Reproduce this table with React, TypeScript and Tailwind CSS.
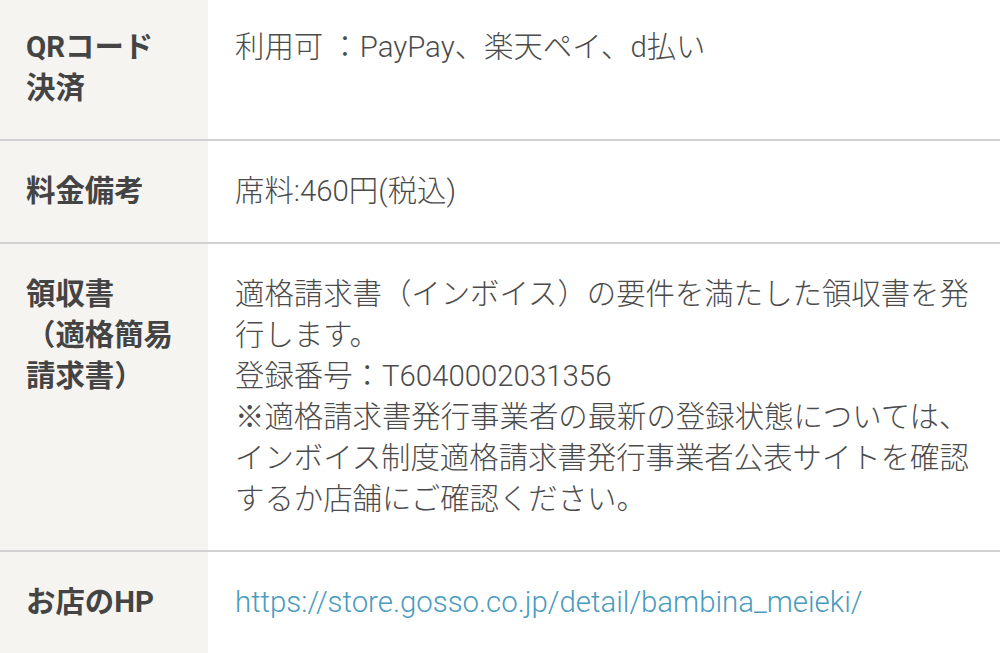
import React from 'react';

interface Row {
  label: React.ReactNode;
  value: React.ReactNode;
}

const rows: Row[] = [
  {
    label: 'QRコード決済',
    value: '利用可 ：PayPay、楽天ペイ、d払い',
  },
  {
    label: '料金備考',
    value: '席料:460円(税込)',
  },
  {
    label: (
      <>
        領収書
        <br />
        （適格簡易請求書）
      </>
    ),
    value: (
      <>
        適格請求書（インボイス）の要件を満たした領収書を発行します。
        <br />
        登録番号：T6040002031356
        <br />
        ※適格請求書発行事業者の最新の登録状態については、インボイス制度適格請求書発行事業者公表サイトを確認するか店舗にご確認ください。
      </>
    ),
  },
  {
    label: 'お店のHP',
    value: (
      <a href="#" className="text-[#4a9bbd]">
        https://store.gosso.co.jp/detail/bambina_meieki/
      </a>
    ),
  },
];

const App: React.FC = () => {
  return (
    <div
      className="w-[1000px] h-[653px] overflow-hidden bg-white"
      style={{ fontFamily: 'Roboto, "Noto Sans CJK JP", sans-serif' }}
    >
      <div className="flex flex-col -mt-[3px]">
        {rows.map((row, i) => (
          <div
            key={i}
            className="flex border-b-2 border-[#d2d2d2] text-[29.4px] leading-[41px]"
          >
            {/* header cell */}
            <div className="w-[208px] shrink-0 bg-[#f5f4f0] pl-[26px] pr-[31px] py-[30px] font-bold text-[#444444]">
              {row.label}
            </div>
            {/* value cell */}
            <div className="flex-1 pl-[27px] pr-[26px] py-[30px] font-light text-[#4b4b4b]">
              {row.value}
            </div>
          </div>
        ))}
      </div>
    </div>
  );
};

export default App;
